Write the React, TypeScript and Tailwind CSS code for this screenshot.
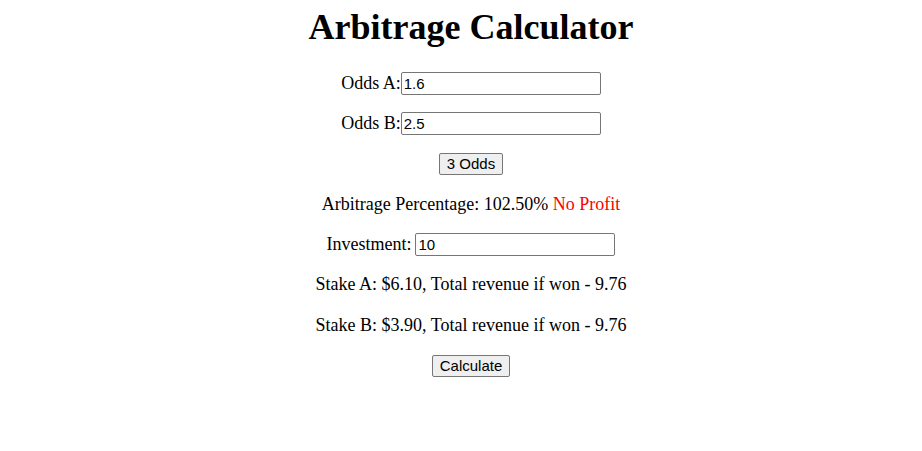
import React, { useState } from 'react';

const inputCls =
  "w-[200px] h-[23px] border border-[#767676] rounded-[2px] bg-white px-[2px] text-[15px] text-black outline-none font-['Liberation_Sans',Arial,sans-serif]";
const buttonCls =
  "h-[22px] px-[7px] border border-[#767676] rounded-[2px] bg-[#efefef] text-[15px] leading-[18px] text-black font-['Liberation_Sans',Arial,sans-serif]";

const App: React.FC = () => {
  const [oddsA, setOddsA] = useState('1.6');
  const [oddsB, setOddsB] = useState('2.5');
  const [investment, setInvestment] = useState('10');

  const a = parseFloat(oddsA) || 0;
  const b = parseFloat(oddsB) || 0;
  const inv = parseFloat(investment) || 0;
  const sum = (a ? 1 / a : 0) + (b ? 1 / b : 0);
  const pct = sum * 100;
  const stakeA = sum ? (inv * (1 / a)) / sum : 0;
  const stakeB = sum ? (inv * (1 / b)) / sum : 0;
  const profit = pct < 100;

  return (
    <div className="min-h-screen bg-white text-black font-['Liberation_Serif','Times_New_Roman',serif] text-[18px]">
      <div className="flex flex-col items-center pt-[6px] pl-[20px]">
        <h1 className="text-[36px] font-bold leading-[42px]">Arbitrage Calculator</h1>

        <div className="flex flex-col items-center gap-[16.36px] mt-[23px]">
          <div className="h-6 flex items-center">
            <label>Odds A:</label>
            <input className={inputCls} value={oddsA} onChange={(e) => setOddsA(e.target.value)} />
          </div>
          <div className="h-6 flex items-center">
            <label>Odds B:</label>
            <input className={inputCls} value={oddsB} onChange={(e) => setOddsB(e.target.value)} />
          </div>
          <div className="h-6 flex items-center">
            <button className={buttonCls}>3 Odds</button>
          </div>
          <div className="h-6 flex items-center">
            <span>
              Arbitrage Percentage: {pct.toFixed(2)}%{' '}
              <span className="text-[#ff0000]">{profit ? 'Profit' : 'No Profit'}</span>
            </span>
          </div>
          <div className="h-6 flex items-center gap-[4px]">
            <label>Investment:</label>
            <input className={inputCls} value={investment} onChange={(e) => setInvestment(e.target.value)} />
          </div>
          <div className="h-6 flex items-center">
            Stake A: ${stakeA.toFixed(2)}, Total revenue if won - {(stakeA * a).toFixed(2)}
          </div>
          <div className="h-6 flex items-center">
            Stake B: ${stakeB.toFixed(2)}, Total revenue if won - {(stakeB * b).toFixed(2)}
          </div>
          <div className="h-6 flex items-center">
            <button className={buttonCls}>Calculate</button>
          </div>
        </div>
      </div>
    </div>
  );
};

export default App;
